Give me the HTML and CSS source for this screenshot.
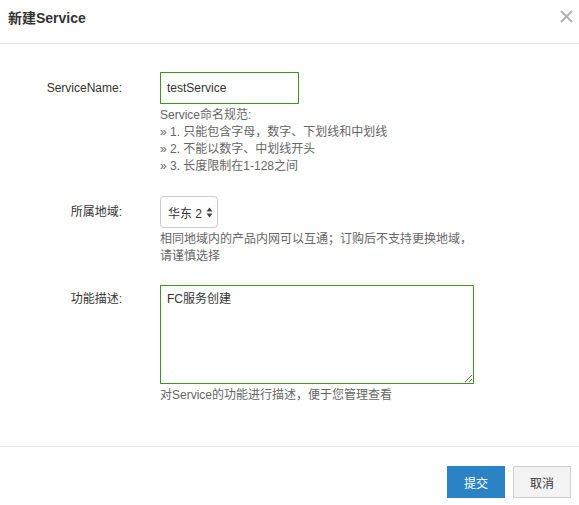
FILE: index.html
```html
<!DOCTYPE html>
<html lang="zh-CN">
<head>
<meta charset="utf-8">
<title>新建Service</title>
<link rel="stylesheet" href="styles.css">
</head>
<body>
<div class="dialog">
  <div class="header">
    <div class="title">新建Service</div>
    <svg class="close" width="13" height="13" viewBox="0 0 13 13"><path d="M1 1 L12 12 M12 1 L1 12" stroke="#b3b3b3" stroke-width="2" fill="none"/></svg>
  </div>
  <div class="body">
    <div class="row row-name">
      <div class="label">ServiceName:</div>
      <div class="field">
        <input class="input" type="text" value="testService">
        <div class="help">
          <div>Service命名规范:</div>
          <div>» 1. 只能包含字母，数字、下划线和中划线</div>
          <div>» 2. 不能以数字、中划线开头</div>
          <div>» 3. 长度限制在1-128之间</div>
        </div>
      </div>
    </div>
    <div class="row row-region">
      <div class="label">所属地域:</div>
      <div class="field">
        <div class="select"><span>华东 2</span><svg class="arrows" width="7" height="11" viewBox="0 0 7 11"><path d="M3.5 0.5 L6.5 4.5 L0.5 4.5 Z M3.5 10.5 L6.5 6.5 L0.5 6.5 Z" fill="#444"/></svg></div>
        <div class="help">
          <div>相同地域内的产品内网可以互通；订购后不支持更换地域，</div>
          <div>请谨慎选择</div>
        </div>
      </div>
    </div>
    <div class="row row-desc">
      <div class="label label-top">功能描述:</div>
      <div class="field">
        <textarea class="textarea">FC服务创建</textarea>
        <div class="help">
          <div>对Service的功能进行描述，便于您管理查看</div>
        </div>
      </div>
    </div>
  </div>
  <div class="footer">
    <button class="btn btn-primary">提交</button>
    <button class="btn btn-default">取消</button>
  </div>
</div>
</body>
</html>
```
FILE: styles.css
```css
html, body {
  margin: 0;
  padding: 0;
  background: #fff;
}
body {
  font-family: "Liberation Sans", "Noto Sans CJK SC", sans-serif;
  font-size: 12px;
  color: #333;
}
.dialog {
  width: 579px;
  height: 505px;
  display: flex;
  flex-direction: column;
}
.header {
  border-bottom: 1px solid #e5e5e5;
  display: flex;
  justify-content: space-between;
  align-items: flex-start;
  padding: 9px 6px 0 8px;
  box-sizing: border-box;
  height: 44px;
}
.title {
  font-size: 14px;
  font-weight: bold;
  line-height: 18px;
  color: #333;
}
.close {
  margin-top: 1px;
}
.body {
  padding: 28px 0 42px;
}
.row {
  display: grid;
  grid-template-columns: 122px 1fr;
  column-gap: 38px;
  margin-bottom: 21px;
}
.row-desc {
  margin-bottom: 0;
}
.row-region {
  margin-bottom: 20px;
}
.label {
  text-align: right;
  line-height: 32px;
  color: #333;
}
.label-top {
  line-height: 28px;
}
.field {
  display: flex;
  flex-direction: column;
  align-items: flex-start;
}
.input {
  width: 139px;
  height: 32px;
  box-sizing: border-box;
  border: 1px solid #3b9a18;
  padding: 0 6px;
  font-family: inherit;
  font-size: 12px;
  color: #333;
  outline: none;
  margin: 0;
}
.help {
  margin-top: 3px;
  line-height: 17px;
  color: #666;
}
.select {
  width: 58px;
  height: 32px;
  box-sizing: border-box;
  border: 1px solid #ccc;
  border-radius: 4px;
  display: flex;
  align-items: center;
  gap: 4px;
  padding: 0 0 0 7px;
  color: #333;
  background: #fff;
  white-space: nowrap;
}
.textarea {
  width: 314px;
  height: 99px;
  box-sizing: border-box;
  border: 1px solid #3b9a18;
  padding: 5px 6px;
  font-family: inherit;
  font-size: 12px;
  line-height: 16px;
  color: #333;
  outline: none;
  margin: 0;
  display: block;
}
.footer {
  border-top: 1px solid #e5e5e5;
  display: flex;
  justify-content: flex-end;
  gap: 8px;
  padding: 19px 8px 0 0;
}
.btn {
  width: 58px;
  height: 32px;
  box-sizing: border-box;
  font-family: inherit;
  font-size: 12px;
  margin: 0;
  padding: 0;
  cursor: pointer;
}
.btn-primary {
  background: #2b83c6;
  border: 1px solid #2b83c6;
  color: #fff;
}
.btn-default {
  background: #f3f3f3;
  border: 1px solid #cfcfcf;
  color: #333;
}
```
